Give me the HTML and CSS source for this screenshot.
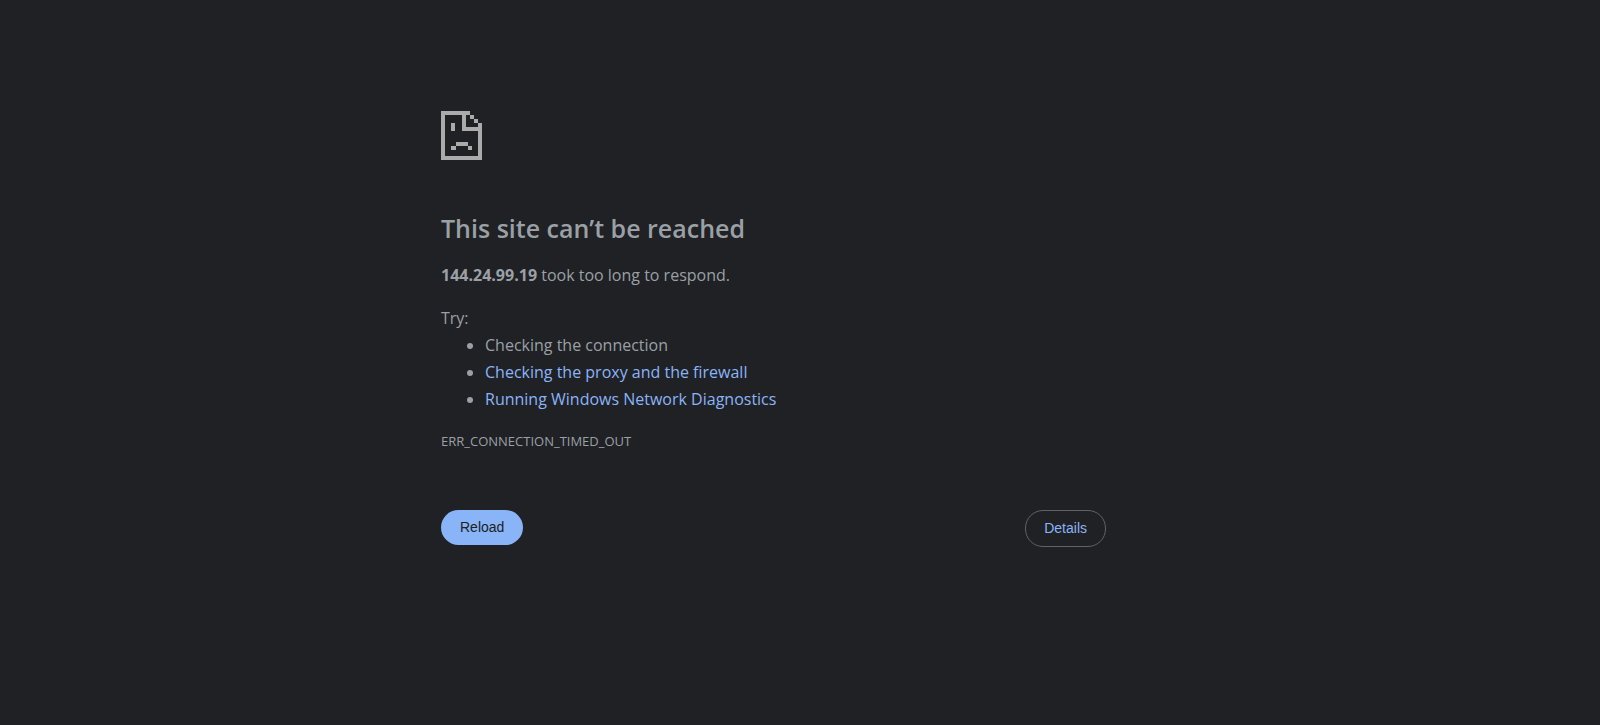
FILE: index.html
```
<!DOCTYPE html>
<html lang="en">
<head>
  <meta charset="UTF-8" />
  <meta name="viewport" content="width=device-width, initial-scale=1.0" />
  <title>144.24.99.19</title>
  <link rel="stylesheet" href="styles.css">
</head>
<body>
  <main class="error-page">
    <svg class="error-icon" viewBox="0 0 41 49" shape-rendering="crispEdges" aria-hidden="true">
      <!-- page outline with folded corner -->
      <path d="M0 0h29v4h-4v12h12v-4h4v37H0zM4 4v41h33V20H21V4z" fill-rule="evenodd" />
      <path d="M29 4h4v4h-4zM33 8h4v4h-4z" />
      <!-- face -->
      <path d="M10 12h4v8h-4zM15 31h12v4H15zM10 35h5v4h-5zM27 35h4v4h-4z" />
    </svg>
    <h1 class="title">This site can’t be reached</h1>
    <p class="summary"><strong>144.24.99.19</strong> took too long to respond.</p>
    <div class="suggestions">
      <p class="try">Try:</p>
      <ul class="suggestion-list">
        <li>Checking the connection</li>
        <li><a href="#proxy">Checking the proxy and the firewall</a></li>
        <li><a href="#diagnostics">Running Windows Network Diagnostics</a></li>
      </ul>
    </div>
    <div class="error-code">ERR_CONNECTION_TIMED_OUT</div>
    <div class="buttons">
      <button type="button" class="btn btn-primary">Reload</button>
      <button type="button" class="btn btn-secondary">Details</button>
    </div>
  </main>
</body>
</html>
```
FILE: styles.css
```
body {
  margin: 0;
  padding: 0 494px 0 441px;
  background: #202124;
  color: #9aa0a6;
  font-family: "Segoe UI", "Open Sans", "Noto Sans", sans-serif;
  font-size: 16px;
  line-height: 27px;
}
.error-page {
  padding-top: 111px;
}
.error-icon {
  display: block;
  width: 41px;
  height: 49px;
  fill: #ababab;
}
.title {
  margin: 50px 0 16px;
  font-size: 25px;
  font-weight: 600;
  line-height: 36px;
}
.summary {
  margin: 0 0 16px;
}
.try {
  margin: 0;
}
.suggestion-list {
  margin: 0;
  padding-left: 44px;
}
a {
  color: #8ab4f8;
  text-decoration: none;
}
.error-code {
  margin-top: 15px;
  font-size: 13px;
}
.buttons {
  display: flex;
  justify-content: space-between;
  align-items: flex-start;
  margin-top: 55px;
}
.btn {
  padding: 0 18px;
  border: none;
  border-radius: 18px;
  font-family: Arial, "Liberation Sans", sans-serif;
  font-size: 14px;
  line-height: 35px;
  cursor: pointer;
}
.btn-primary {
  padding: 0 19px;
  background: #8ab4f8;
  color: #202124;
}
.btn-secondary {
  border: 1px solid #5f6368;
  background: transparent;
  color: #8ab4f8;
}

@media (max-width: 1200px) {
  body {
    padding: 0 24px;
  }
  .error-page {
    max-width: 666px;
    margin: 0 auto;
  }
}
```
